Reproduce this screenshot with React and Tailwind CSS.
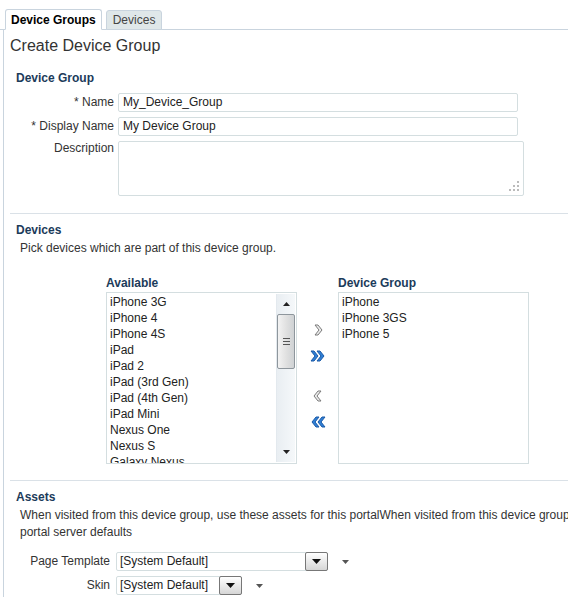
import React from 'react';

const available = [
    'iPhone 3G',
    'iPhone 4',
    'iPhone 4S',
    'iPad',
    'iPad 2',
    'iPad (3rd Gen)',
    'iPad (4th Gen)',
    'iPad Mini',
    'Nexus One',
    'Nexus S',
    'Galaxy Nexus',
];

const selected = ['iPhone', 'iPhone 3GS', 'iPhone 5'];

const Chevron = ({ dir = 'right', double, active }) => {
    const flip = dir === 'left' ? 'scale(-1,1) translate(-16,0)' : undefined;
    const fill = active ? '#2f7fd6' : '#ececec';
    const stroke = active ? '#1c5aa6' : '#7a7a7a';
    return (
        <svg width="16" height="16" viewBox="0 0 16 16">
            <g transform={flip} strokeWidth="1" strokeLinejoin="round">
                {double ? (
                    <>
                        <path d="M1 3 L4 3 L8 8 L4 13 L1 13 L5 8 Z" fill={fill} stroke={stroke} />
                        <path d="M7 3 L10 3 L14 8 L10 13 L7 13 L11 8 Z" fill={fill} stroke={stroke} />
                    </>
                ) : (
                    <path d="M5 3 L8 3 L12 8 L8 13 L5 13 L9 8 Z" fill={fill} stroke={stroke} />
                )}
            </g>
        </svg>
    );
};

const Field = ({ value, className = '' }) => (
    <div className={`h-[19px] border border-[#d4dee0] rounded-[2px] px-[4px] leading-[17px] text-[#222] ${className}`}>
        {value}
    </div>
);

const SelectBox = ({ value, width }) => (
    <div className="flex items-center gap-[14px]">
        <div className={`${width} h-[19px] flex items-center justify-between border border-[#d4dee0] rounded-[2px] pl-[3px]`}>
            <span className="text-[#222] leading-[17px]">{value}</span>
            <div className="w-[23px] h-[19px] -mr-px border border-[#777] rounded-[2px] bg-gradient-to-b from-white to-[#d6d6d6] flex items-center justify-center">
                <svg width="9" height="5" viewBox="0 0 9 5"><path d="M0 0 L9 0 L4.5 5 Z" fill="#111" /></svg>
            </div>
        </div>
        <svg width="7" height="4" viewBox="0 0 7 4"><path d="M0 0 L7 0 L3.5 4 Z" fill="#555" /></svg>
    </div>
);

const App = () => {
    return (
        <div className="w-[568px] h-[597px] overflow-hidden bg-white text-[12px] text-[#333] font-['Liberation_Sans',Arial,sans-serif]">
            {/* tab strip */}
            <div className="flex items-end gap-[4px] pl-[5px] pt-[9px] border-b border-[#c9d4de]">
                <div className="h-[21px] px-[5px] -mb-px border border-[#c9d4de] border-b-white rounded-t-[3px] bg-white font-bold text-black leading-[20px]">
                    Device Groups
                </div>
                <div className="h-[20px] px-[6px] -mb-px border border-[#c9d4de] rounded-t-[3px] bg-[#dfe7e9] text-[#444] leading-[19px]">
                    Devices
                </div>
            </div>

            <div className="ml-[3px] border-l border-[#c9d4de] h-full">
                <div className="pl-[6px] pt-[6px] text-[16px] text-[#333] leading-[20px]">Create Device Group</div>

                {/* device group */}
                <div className="pl-[12px] mt-[15px] font-bold text-[#1c3b5a] leading-[14px]">Device Group</div>
                <div className="mt-[8px] grid grid-cols-[110px_1fr] gap-x-[4px] gap-y-[5px] pr-[44px] items-start">
                    <div className="text-right leading-[19px]">* Name</div>
                    <Field value="My_Device_Group" className="w-[400px]" />
                    <div className="text-right leading-[19px]">* Display Name</div>
                    <Field value="My Device Group" className="w-[400px]" />
                    <div className="text-right leading-[14px]">Description</div>
                    <div className="relative w-[406px] h-[55px] border border-[#d4dee0] rounded-[2px]">
                        <svg className="absolute right-[3px] bottom-[3px]" width="12" height="12" viewBox="0 0 12 12">
                            <g fill="#bbbbbb">
                                <rect x="9" y="1" width="2" height="2" />
                                <rect x="5" y="5" width="2" height="2" />
                                <rect x="9" y="5" width="2" height="2" />
                                <rect x="1" y="9" width="2" height="2" />
                                <rect x="5" y="9" width="2" height="2" />
                                <rect x="9" y="9" width="2" height="2" />
                            </g>
                        </svg>
                    </div>
                </div>

                <div className="ml-[6px] mt-[17px] border-t border-[#dae1e7]" />

                {/* devices */}
                <div className="pl-[12px] mt-[9px] font-bold text-[#1c3b5a] leading-[14px]">Devices</div>
                <div className="pl-[16px] mt-[4px] leading-[15px]">Pick devices which are part of this device group.</div>

                <div className="mt-[20px] flex items-start pl-[102px]">
                    <div className="flex flex-col">
                        <div className="font-bold text-[#1c3b5a] leading-[14px] h-[16px]">Available</div>
                        <div className="w-[191px] h-[172px] border border-[#d4dee0] flex overflow-hidden">
                            <div className="flex-1 pl-[3px] pt-[1px] overflow-hidden">
                                {available.map((d) => (
                                    <div key={d} className="leading-[16px] text-[#222] whitespace-nowrap">{d}</div>
                                ))}
                            </div>
                            {/* scrollbar */}
                            <div className="w-[19px] my-[1px] mr-[1px] bg-gradient-to-r from-[#e9eef2] to-[#f5f8fa] border-l border-[#e3e9ee] flex flex-col items-center">
                                <svg className="mt-[8px]" width="7" height="4" viewBox="0 0 7 4"><path d="M0 4 L7 4 L3.5 0 Z" fill="#222" /></svg>
                                <div className="mt-[8px] w-[18px] h-[55px] rounded-[2px] border border-[#8e969c] bg-gradient-to-r from-[#f3f3f3] via-[#e1e1e1] to-[#cfd2d4] flex flex-col items-center justify-center gap-[2px]">
                                    <div className="w-[7px] h-px bg-[#555]" />
                                    <div className="w-[7px] h-px bg-[#555]" />
                                    <div className="w-[7px] h-px bg-[#555]" />
                                </div>
                                <div className="flex-1" />
                                <svg className="mb-[8px]" width="7" height="4" viewBox="0 0 7 4"><path d="M0 0 L7 0 L3.5 4 Z" fill="#222" /></svg>
                            </div>
                        </div>
                    </div>

                    <div className="w-[41px] pt-[46px] flex flex-col items-center">
                        <Chevron dir="right" />
                        <div className="mt-[10px]"><Chevron dir="right" double active /></div>
                        <div className="mt-[24px]"><Chevron dir="left" /></div>
                        <div className="mt-[10px]"><Chevron dir="left" double active /></div>
                    </div>

                    <div className="flex flex-col">
                        <div className="font-bold text-[#1c3b5a] leading-[14px] h-[16px]">Device Group</div>
                        <div className="w-[191px] h-[172px] border border-[#d4dee0] pl-[3px] pt-[1px]">
                            {selected.map((d) => (
                                <div key={d} className="leading-[16px] text-[#222]">{d}</div>
                            ))}
                        </div>
                    </div>
                </div>

                <div className="ml-[6px] mt-[16px] border-t border-[#dae1e7]" />

                {/* assets */}
                <div className="pl-[12px] mt-[9px] font-bold text-[#1c3b5a] leading-[14px]">Assets</div>
                <div className="pl-[16px] mt-[3px] leading-[17px] w-[800px]">
                    When visited from this device group, use these assets for this portalWhen visited from this device group, use these assets
                    <br />
                    portal server defaults
                </div>

                <div className="mt-[11px] grid grid-cols-[106px_1fr] gap-x-[6px] gap-y-[5px] items-center">
                    <div className="text-right leading-[19px]">Page Template</div>
                    <SelectBox value="[System Default]" width="w-[212px]" />
                    <div className="text-right leading-[19px]">Skin</div>
                    <SelectBox value="[System Default]" width="w-[126px]" />
                </div>
            </div>
        </div>
    );
};

export default App;
